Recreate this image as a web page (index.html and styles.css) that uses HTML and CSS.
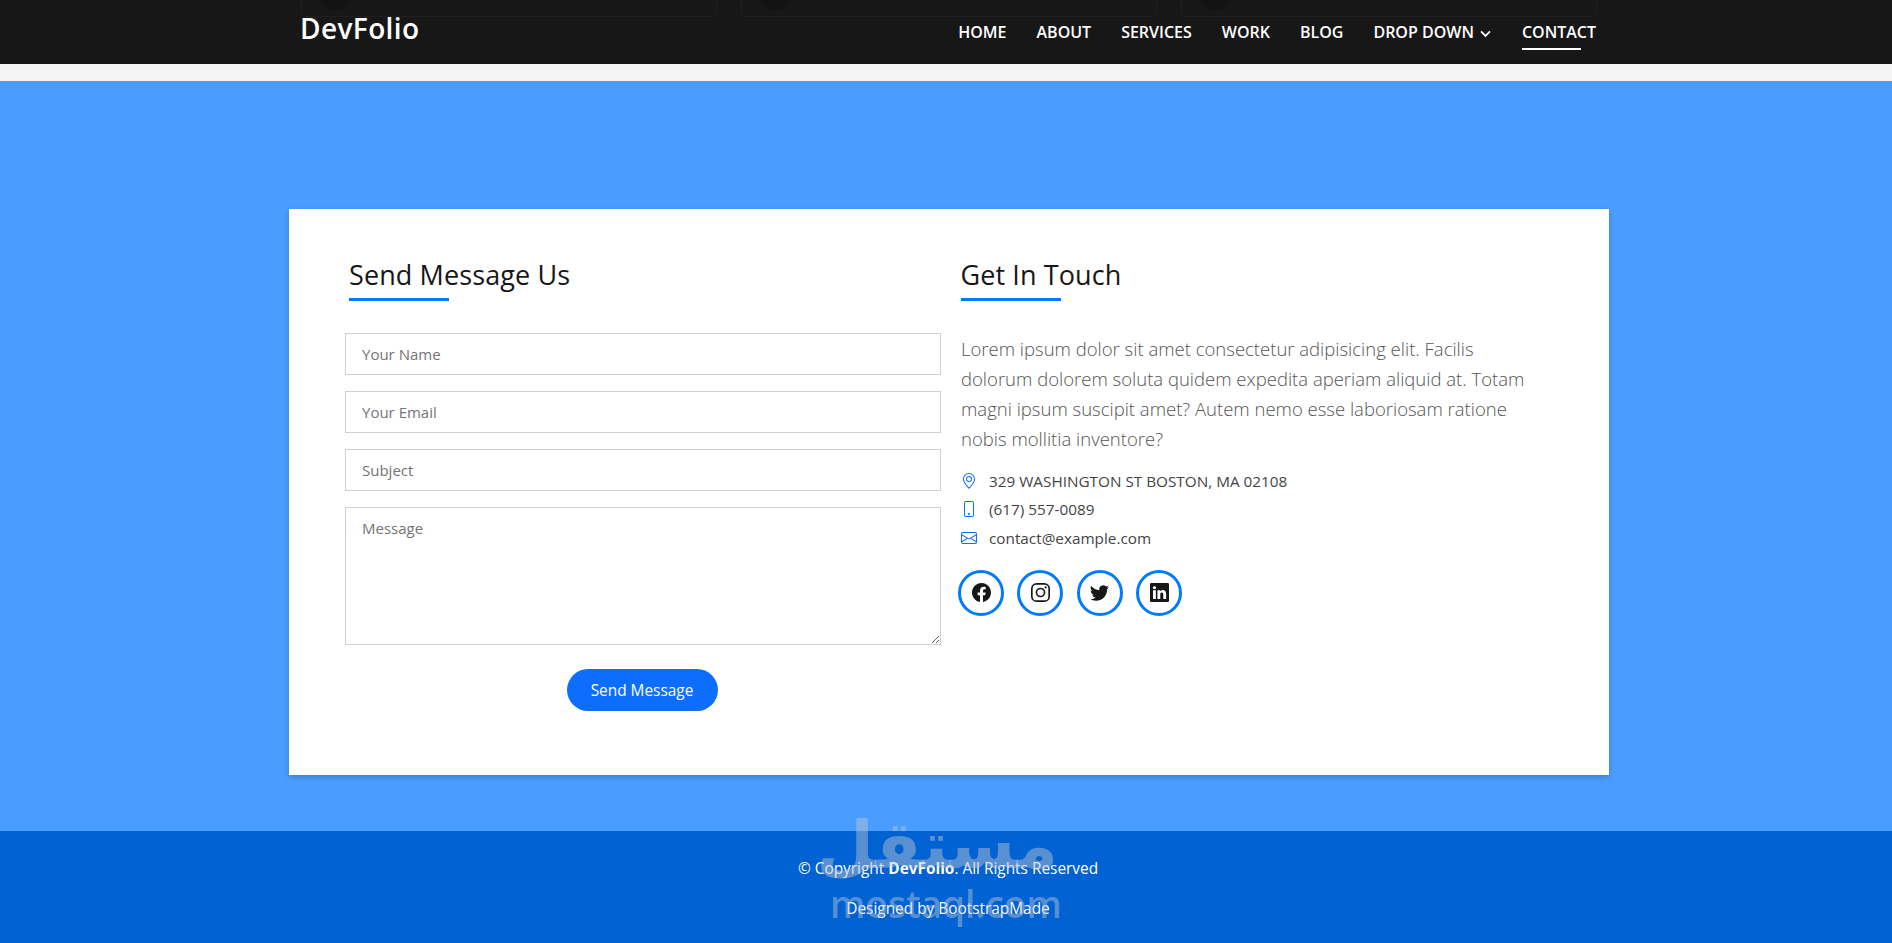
FILE: index.html
```html
<!DOCTYPE html>
<html lang="en">
<head>
  <meta charset="UTF-8">
  <title>DevFolio - Contact</title>
  <meta name="viewport" content="width=device-width, initial-scale=1.0">
  <link rel="stylesheet" href="styles.css">
</head>
<body>
  <header class="topbar">
    <!-- page content scrolled under the fixed bar -->
    <div class="under-cards">
      <div class="under-card"><span class="under-dot"></span></div>
      <div class="under-card"><span class="under-dot"></span></div>
      <div class="under-card"><span class="under-dot"></span></div>
    </div>
    <a class="logo" href="#">DevFolio</a>
    <nav class="nav">
      <a href="#">HOME</a>
      <a href="#">ABOUT</a>
      <a href="#">SERVICES</a>
      <a href="#">WORK</a>
      <a href="#">BLOG</a>
      <a href="#" class="has-drop">DROP DOWN
        <svg class="chevron" viewBox="0 0 16 16"><path d="M2.5 5.5 8 11l5.5-5.5" fill="none" stroke="currentColor" stroke-width="2.2"/></svg>
      </a>
      <a href="#" class="active">CONTACT</a>
    </nav>
  </header>
  <div class="band"></div>

  <section class="contact">
    <div class="contact-box">
      <div class="col-form">
        <h2 class="box-title">Send Message Us</h2>
        <form class="form" autocomplete="off">
          <input class="field" type="text" placeholder="Your Name">
          <input class="field" type="text" placeholder="Your Email">
          <input class="field" type="text" placeholder="Subject">
          <textarea class="field field-area" placeholder="Message"></textarea>
          <button class="send-btn" type="button">Send Message</button>
        </form>
      </div>
      <div class="col-info">
        <h2 class="box-title">Get In Touch</h2>
        <p class="lead">Lorem ipsum dolor sit amet consectetur adipisicing elit. Facilis dolorum dolorem soluta quidem expedita aperiam aliquid at. Totam magni ipsum suscipit amet? Autem nemo esse laboriosam ratione nobis mollitia inventore?</p>
        <ul class="info-list">
          <li>
            <svg class="info-icon" viewBox="0 0 16 16"><path d="M12.166 8.94c-.524 1.062-1.234 2.12-1.96 3.07A31.493 31.493 0 0 1 8 14.58a31.481 31.481 0 0 1-2.206-2.57c-.726-.95-1.436-2.008-1.96-3.07C3.304 7.867 3 6.862 3 6a5 5 0 0 1 10 0c0 .862-.305 1.867-.834 2.94zM8 16s6-5.686 6-10A6 6 0 0 0 2 6c0 4.314 6 10 6 10z"/><path d="M8 8a2 2 0 1 1 0-4 2 2 0 0 1 0 4zm0 1a3 3 0 1 0 0-6 3 3 0 0 0 0 6z"/></svg>
            329 WASHINGTON ST BOSTON, MA 02108
          </li>
          <li>
            <svg class="info-icon" viewBox="0 0 16 16"><path d="M11 1a1 1 0 0 1 1 1v12a1 1 0 0 1-1 1H5a1 1 0 0 1-1-1V2a1 1 0 0 1 1-1h6zM5 0a2 2 0 0 0-2 2v12a2 2 0 0 0 2 2h6a2 2 0 0 0 2-2V2a2 2 0 0 0-2-2H5z"/><path d="M8 14a1 1 0 1 0 0-2 1 1 0 0 0 0 2z"/></svg>
            (617) 557-0089
          </li>
          <li>
            <svg class="info-icon" viewBox="0 0 16 16"><path d="M0 4a2 2 0 0 1 2-2h12a2 2 0 0 1 2 2v8a2 2 0 0 1-2 2H2a2 2 0 0 1-2-2V4Zm2-1a1 1 0 0 0-1 1v.217l7 4.2 7-4.2V4a1 1 0 0 0-1-1H2Zm13 2.383-4.708 2.825L15 11.105V5.383Zm-.034 6.876-5.64-3.471L8 9.583l-1.326-.795-5.64 3.47A1 1 0 0 0 2 13h12a1 1 0 0 0 .966-.741ZM1 11.105l4.708-2.897L1 5.383v5.722Z"/></svg>
            contact@example.com
          </li>
        </ul>
        <div class="socials">
          <a class="social" href="#"><svg viewBox="0 0 16 16"><path d="M16 8.049c0-4.446-3.582-8.05-8-8.05C3.58 0-.002 3.603-.002 8.05c0 4.017 2.926 7.347 6.75 7.951v-5.625h-2.03V8.05H6.75V6.275c0-2.017 1.195-3.131 3.022-3.131.876 0 1.791.157 1.791.157v1.98h-1.009c-.993 0-1.303.621-1.303 1.258v1.51h2.218l-.354 2.326H9.25V16c3.824-.604 6.75-3.934 6.75-7.951z"/></svg></a>
          <a class="social" href="#"><svg viewBox="0 0 16 16"><rect x=".7" y=".7" width="14.6" height="14.6" rx="4" fill="none" stroke="currentColor" stroke-width="1.4"/><circle cx="8" cy="8" r="3.4" fill="none" stroke="currentColor" stroke-width="1.4"/><circle cx="12.3" cy="3.7" r=".95"/></svg></a>
          <a class="social" href="#"><svg viewBox="0 0 16 16"><path d="M5.026 15c6.038 0 9.341-5.003 9.341-9.334 0-.14 0-.282-.006-.422A6.685 6.685 0 0 0 16 3.542a6.658 6.658 0 0 1-1.889.518 3.301 3.301 0 0 0 1.447-1.817 6.533 6.533 0 0 1-2.087.793A3.286 3.286 0 0 0 7.875 6.03a9.325 9.325 0 0 1-6.767-3.429 3.289 3.289 0 0 0 1.018 4.382A3.323 3.323 0 0 1 .64 6.575v.045a3.288 3.288 0 0 0 2.632 3.218 3.203 3.203 0 0 1-.865.115 3.23 3.23 0 0 1-.614-.057 3.283 3.283 0 0 0 3.067 2.277A6.588 6.588 0 0 1 .78 13.58a6.32 6.32 0 0 1-.78-.045A9.344 9.344 0 0 0 5.026 15z"/></svg></a>
          <a class="social" href="#"><svg viewBox="0 0 16 16"><path d="M0 1.146C0 .513.526 0 1.175 0h13.65C15.474 0 16 .513 16 1.146v13.708c0 .633-.526 1.146-1.175 1.146H1.175C.526 16 0 15.487 0 14.854V1.146zm4.943 12.248V6.169H2.542v7.225h2.401zm-1.2-8.212c.837 0 1.358-.554 1.358-1.248-.015-.709-.52-1.248-1.342-1.248-.822 0-1.359.54-1.359 1.248 0 .694.521 1.248 1.327 1.248h.016zm4.908 8.212V9.359c0-.216.016-.432.08-.586.173-.431.568-.878 1.232-.878.869 0 1.216.662 1.216 1.634v3.865h2.401V9.25c0-2.22-1.184-3.252-2.764-3.252-1.274 0-1.845.7-2.165 1.193v.025h-.016a5.54 5.54 0 0 1 .016-.025V6.169h-2.4c.03.678 0 7.225 0 7.225h2.4z"/></svg></a>
        </div>
      </div>
    </div>
  </section>

  <footer class="footer">
    <p>© Copyright <strong>DevFolio</strong>. All Rights Reserved</p>
    <p>Designed by BootstrapMade</p>
    <!-- site watermark stamped over the shot -->
    <div class="watermark">
      <span class="wm-ar" lang="ar" dir="rtl">مستقل</span>
      <span class="wm-en">mostaql.com</span>
    </div>
  </footer>
</body>
</html>
```

FILE: styles.css
```css
* {
  box-sizing: border-box;
}
html, body {
  height: 100%;
}
body {
  margin: 0;
  height: 943px;
  overflow: hidden;
  font-family: "Open Sans", "Noto Sans", sans-serif;
  background: #f5f5f5;
  color: #171717;
}
.topbar {
  position: relative;
  height: 64px;
  background: #171717;
  display: flex;
  justify-content: space-between;
  padding: 0 296px 0 300px;
  overflow: hidden;
}
.under-cards {
  position: absolute;
  left: 301px;
  top: -39px;
  display: flex;
  gap: 24px;
}
.under-card {
  width: 416px;
  height: 56px;
  border: 1px solid #1f1f1f;
  border-radius: 5px;
  padding-left: 18px;
}
.under-dot {
  display: block;
  width: 30px;
  height: 48px;
  border-radius: 14px;
  background: #131313;
}
.logo {
  font-size: 28px;
  font-weight: 600;
  line-height: 30px;
  margin-top: 13px;
  color: #fff;
  text-decoration: none;
  letter-spacing: 0.4px;
}
.nav {
  display: flex;
  gap: 30px;
  padding-top: 21px;
}
.nav a {
  position: relative;
  height: 22px;
  font-size: 16px;
  font-weight: 600;
  line-height: 22px;
  color: #fff;
  text-decoration: none;
  white-space: nowrap;
}
.has-drop {
  display: flex;
  align-items: center;
  gap: 5px;
}
.chevron {
  width: 13px;
  height: 13px;
  margin-top: 3px;
}
.nav .active::after {
  content: "";
  position: absolute;
  left: 0;
  top: 27px;
  width: 59px;
  height: 2px;
  background: #fff;
}
.band {
  height: 17px;
  background: #f5f5f5;
}
.contact {
  height: 750px;
  background: #4a9dff;
  padding: 128px 0 0 289px;
}
.contact-box {
  width: 1320px;
  height: 566px;
  background: #fff;
  box-shadow: 0 2px 6px rgba(0, 0, 0, 0.2);
  display: flex;
  gap: 20px;
  padding: 47px 56px 0;
}
.col-form {
  width: 596px;
}
.col-info {
  width: 592px;
}
.box-title {
  margin: 0;
  position: relative;
  height: 45px;
  font-size: 27px;
  font-weight: 500;
  line-height: 38px;
  letter-spacing: 0.1px;
  color: #171717;
}
.box-title::after {
  content: "";
  position: absolute;
  left: 0;
  bottom: 0;
  width: 100px;
  height: 3px;
  background: #007bff;
}
.col-form .box-title {
  margin-left: 4px;
}
.col-info .box-title {
  margin-left: -0.5px;
}
.form {
  margin-top: 32px;
  display: flex;
  flex-direction: column;
  gap: 16px;
}
.field {
  display: block;
  width: 100%;
  height: 42px;
  border: 1px solid #d0d0d0;
  border-radius: 0;
  padding: 0 16px;
  font-family: inherit;
  font-size: 15px;
  color: #333;
  outline: none;
}
.field::placeholder {
  color: #757575;
  opacity: 1;
}
.field-area {
  height: 138px;
  padding-top: 9px;
  line-height: 22px;
}
.send-btn {
  display: block;
  align-self: center;
  width: 151px;
  height: 42px;
  margin: 8px 2px 0 0;
  border: none;
  border-radius: 21px;
  background: #0d6efd;
  color: #fff;
  font-family: inherit;
  font-size: 15.4px;
  cursor: pointer;
}
.lead {
  width: 570px;
  margin: 33px 0 0;
  font-size: 18.5px;
  font-weight: 300;
  line-height: 30px;
  color: #555;
}
.info-list {
  list-style: none;
  margin: 13px 0 0;
  padding: 0;
}
.info-list li {
  display: flex;
  align-items: center;
  gap: 12px;
  height: 28.3px;
  font-size: 15.3px;
  color: #444;
}
.info-icon {
  width: 16px;
  height: 16px;
  flex: none;
  fill: #0d6efd;
}
.socials {
  display: flex;
  gap: 13.4px;
  margin: 18px 0 0 -3px;
}
.social {
  width: 46px;
  height: 46px;
  border: 3px solid #007bff;
  border-radius: 50%;
  display: flex;
  align-items: center;
  justify-content: center;
  color: #171717;
}
.social svg {
  width: 19px;
  height: 19px;
  fill: currentColor;
}
.footer {
  position: relative;
  height: 112px;
  background: #0062d3;
  color: #fff;
  text-align: center;
  font-size: 15.4px;
  padding: 27px 0 0 4px;
  line-height: 22px;
}
.footer p {
  margin: 0 0 18px;
}
.footer strong {
  font-weight: 700;
}
.watermark {
  position: absolute;
  left: 830px;
  top: -24px;
  width: 228px;
  text-align: center;
  color: rgba(185, 195, 210, 0.48);
  pointer-events: none;
}
.wm-ar {
  display: block;
  font-family: "DejaVu Sans", sans-serif;
  font-weight: 700;
  font-size: 66px;
  line-height: 78px;
}
.wm-en {
  display: block;
  font-family: "Open Sans", sans-serif;
  font-weight: 600;
  font-size: 37px;
  line-height: 38px;
}
```
